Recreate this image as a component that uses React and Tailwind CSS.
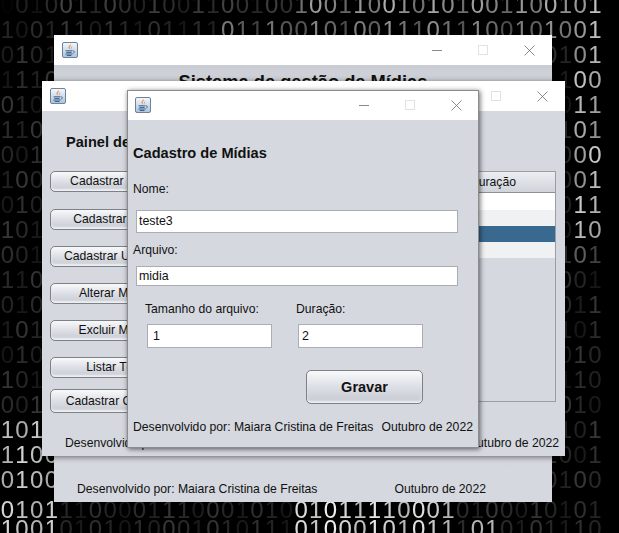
const ROWS = [
  { y: -6, d: '00100110001001100100100110010101001100101' },
  { y: 16, d: '10011101110111101110010100111011100101001' },
  { y: 41, d: '01011010010110100101100101011010010110101' },
  { y: 66, d: '11100110110010110011100101101001011001100' },
  { y: 91, d: '01001101001011010110010110101001101001011' },
  { y: 116, d: '11010010010101001101001011010010110100101' },
  { y: 141, d: '00110101101001011010010101101001011001000' },
  { y: 166, d: '10010110010110100101101001010010110101001' },
  { y: 191, d: '01011001101001011010010110100101101001011' },
  { y: 216, d: '10100101001011010010110100101101001001010' },
  { y: 241, d: '00101101010010110100101101001011010100101' },
  { y: 266, d: '11010010110100101101001011010010110100001' },
  { y: 291, d: '01001011010010110100101101001011010010011' },
  { y: 316, d: '10110100101101001011010010110100101100101' },
  { y: 341, d: '01011010010110100101101001011010010110010' },
  { y: 366, d: '10100101101001011010010110100101101010110' },
  { y: 391, d: '00101101001011010010110100101101001011010' },
  { y: 416, d: '10110010110100101101001011010010110100101' },
  { y: 441, d: '11001011010010110100101101001011010011001' },
  { y: 466, d: '01001011010010110100101101001011010100100' },
  { y: 491, d: '01011100001110001010010111100010100010101', cls: 'mt-[5px] mb-[-6px]' },
  { y: 513, d: '10010101010001010111010001010111010101110' },
];

function digitColor(col, rowY) {
  const x = col * 14.7 + 7;
  const y = rowY + 14;
  const noise = ((col * 7 + rowY * 3) % 11) / 11;
  let a = 0.09 + noise * 0.13;
  if (y < 12 && x > 300) a = 0.4 + noise * 0.3;
  else if (y < 12) a = 0.12 + noise * 0.15;
  else if (y < 35 && x > 300) a = 0.3 + noise * 0.3;
  else if (y < 35 && x > 225) a = 0.2 + noise * 0.3;
  if (x > 566 && y < 262) a = 0.55 + noise * 0.25;
  if (x > 566 && rowY === 241) a = 0.2 + noise * 0.3;
  if (x < 54 && y > 420) a = 0.65 + noise * 0.2;
  if (rowY >= 491 && x > 300 && x < 460) a = 0.7 + noise * 0.25;
  if (rowY === 513 && x > 470 && x < 505) a = 0.7;
  return `rgba(255,255,255,${a.toFixed(2)})`;
}

function BinaryBackdrop() {
  return (
    <div className="absolute inset-0 overflow-hidden bg-black blur-[0.7px] font-['Liberation_Sans',sans-serif] text-[24px] leading-[25px]">
      <div className="-mt-[8px]">
        {ROWS.map(r => (
          <div key={r.y} className={`flex h-[25px] ${r.cls || ''}`}>
            {r.d.split('').map((c, i) => (
              <span key={i} className="w-[14.7px] shrink-0 text-center" style={{ color: digitColor(i, r.y) }}>{c}</span>
            ))}
          </div>
        ))}
      </div>
    </div>
  );
}

function JavaIcon() {
  return (
    <svg viewBox="0 0 16 16" className="w-4 h-4 shrink-0">
      <defs>
        <linearGradient id="jbg" x1="0" y1="0" x2="0" y2="1">
          <stop offset="0" stopColor="#f6f8fb" />
          <stop offset="1" stopColor="#a9c3e0" />
        </linearGradient>
      </defs>
      <rect x="0.5" y="0.5" width="15" height="15" rx="1.5" fill="url(#jbg)" stroke="#6f8296" />
      <path d="M8.9 1.8c1 1.6-2 2.6-1.3 4.4.2.5.4.9.7 1.2-1-.5-2-1.3-1.7-2.5.3-1.1 2.2-1.7 2.3-3.1z" fill="#e07b25" />
      <path d="M10.4 4.2c-1.3.7-1.8 1.2-1.4 2.2.1.3.2.6.2.9.6-.8-.2-1.7 1.2-3.1z" fill="#e07b25" />
      <path d="M3.6 8.8h6.6M4.4 10.4h5.2M3.4 12h7.2M4.8 13.5h4.6" stroke="#3f628a" strokeWidth="1" fill="none" />
      <path d="M10.6 8.8c2-.4 2.6 1.6.3 2.5" stroke="#3f628a" strokeWidth="0.9" fill="none" />
    </svg>
  );
}

function TitleBar() {
  return (
    <div className="h-[30px] shrink-0 bg-white flex items-center pl-2">
      <JavaIcon />
      <div className="ml-auto flex">
        <div className="w-[46px] flex justify-center items-center">
          <div className="w-[10px] h-px bg-[#8a8a8a]" />
        </div>
        <div className="w-[46px] flex justify-center items-center">
          <div className="w-[10px] h-[10px] border border-[#e2e2e2]" />
        </div>
        <div className="w-[46px] flex justify-center items-center">
          <svg viewBox="0 0 11 11" className="w-[11px] h-[11px]" stroke="#6f6f6f" strokeWidth="0.8" fill="none">
            <path d="M0.5 0.5l10 10M10.5 0.5l-10 10" />
          </svg>
        </div>
      </div>
    </div>
  );
}

function JavaButton({ children, className = '' }) {
  return (
    <div className={`flex items-center justify-center rounded-[5px] border border-[#7c8087] bg-gradient-to-b from-[#f8f9fa] via-[#dcdfe5] to-[#c6c9d0] shadow-[inset_0_-2px_2px_#eff0f3] ${className}`}>
      {children}
    </div>
  );
}

function JavaInput({ value, className = '' }) {
  return (
    <div className={`bg-white border border-[#a9adb4] flex items-center text-[12.4px] text-[#111] ${className}`}>
      {value}
    </div>
  );
}

const LEFT_BUTTONS = [
  { label: 'Cadastrar Mídias', cls: 'h-[21px] mt-0' },
  { label: 'Cadastrar Filme', cls: 'h-[21px] mt-[17px]' },
  { label: 'Cadastrar Usuários', cls: 'h-[21px] mt-[16px]' },
  { label: 'Alterar Mídias', cls: 'h-[21px] mt-[16px]' },
  { label: 'Excluir Mídias', cls: 'h-[21px] mt-[16px]' },
  { label: 'Listar Tudo', cls: 'h-[21px] mt-[16px]' },
  { label: 'Cadastrar Coleção', cls: 'h-[24px] mt-[11px]' },
];

export default function App() {
  return (
    <div className="relative w-[619px] h-[533px] overflow-hidden bg-black font-['Liberation_Sans',Arial,sans-serif] text-[12.2px] text-[#111]">
      <BinaryBackdrop />

      {/* back window */}
      <div className="absolute left-[54px] top-[35px] w-[498px] h-[467px] flex flex-col bg-[#d5d8df]">
        <TitleBar />
        <div className="flex-1 flex flex-col bg-gradient-to-b from-[#c9ccd2] to-[#d5d8df] to-[5%]">
          <div className="mt-[7px] text-center text-[18.3px] font-bold leading-5">Sistema de gestão de Mídias</div>
          <div className="relative mt-auto mb-[5px] flex pl-[23px] leading-4">
            <svg viewBox="0 0 22 5" className="absolute right-0 top-[-30px] w-[22px] h-[5px]" fill="none" stroke="#3f8f8c" strokeWidth="2">
              <path d="M1 0c1 4 6 4 7 0M14 0c1 4 6 4 7 0" />
            </svg>
            <span>Desenvolvido por: Maiara Cristina de Freitas</span>
            <span className="ml-[77px]">Outubro de 2022</span>
          </div>
        </div>
      </div>

      {/* middle window */}
      <div className="absolute left-[42px] top-[81px] w-[523px] h-[375px] flex flex-col bg-[#d5d8df] shadow-[0_1px_6px_rgba(0,0,0,0.55)]">
        <TitleBar />
        <div className="flex-1 flex flex-col pt-[21px]">
          <div className="pl-[24px] text-[14.6px] font-bold leading-5">Painel de Controle</div>
          <div className="flex mt-[19px] pl-[8px] pr-[9px]">
            <div className="w-[133px] flex flex-col">
              {LEFT_BUTTONS.map(b => (
                <JavaButton key={b.label} className={b.cls}>{b.label}</JavaButton>
              ))}
            </div>
            <div className="ml-auto w-[340px] h-[231px] border border-[#9a9da3] flex flex-col">
              <div className="h-[21px] shrink-0 bg-gradient-to-b from-[#eceef1] to-[#d0d3da] border-b border-[#8d9096] flex justify-end pr-[39px] items-center">Duração</div>
              <div className="h-[17px] bg-white" />
              <div className="h-[16px] bg-[#f0f1f2]" />
              <div className="h-[16px] bg-[#39698f]" />
              <div className="h-[16px] bg-[#f0f1f3]" />
            </div>
          </div>
          <div className="mt-auto mb-[5px] flex justify-between pl-[23px] pr-[6px] leading-4">
            <span>Desenvolvido por: Maiara Cristina de Freitas</span>
            <span>Outubro de 2022</span>
          </div>
        </div>
      </div>

      {/* front dialog */}
      <div className="absolute left-[127px] top-[90px] w-[352px] h-[358px] flex flex-col bg-[#d5d8df] outline outline-1 -outline-offset-1 outline-[#8c8c8c] shadow-[1px_1px_5px_rgba(0,0,0,0.6)]">
        <TitleBar />
        <div className="flex-1 flex flex-col pl-[6px]">
          <div className="mt-[23px] text-[14.6px] font-bold leading-5">Cadastro de Mídias</div>
          <div className="mt-[18px] leading-4">Nome:</div>
          <JavaInput value="teste3" className="mt-[13px] ml-[3px] w-[322px] h-[23px] pl-[2px]" />
          <div className="mt-[9px] leading-4">Arquivo:</div>
          <JavaInput value="midia" className="mt-[8px] ml-[3px] w-[322px] h-[20px] pl-[2px]" />
          <div className="mt-[15px] flex leading-4">
            <span className="ml-[12px] w-[151px]">Tamanho do arquivo:</span>
            <span>Duração:</span>
          </div>
          <div className="mt-[7px] flex">
            <JavaInput value="1" className="ml-[14px] w-[125px] h-[24px] pl-[5px]" />
            <JavaInput value="2" className="ml-[26px] w-[125px] h-[24px] pl-[3px]" />
          </div>
          <JavaButton className="mt-[22px] ml-[173px] w-[117px] h-[34px] pt-[2px] text-[14.5px] font-bold">Gravar</JavaButton>
          <div className="mt-[15px] flex leading-4 whitespace-nowrap">
            <span>Desenvolvido por: Maiara Cristina de Freitas</span>
            <span className="ml-[8px]">Outubro de 2022</span>
          </div>
        </div>
      </div>
    </div>
  );
}
